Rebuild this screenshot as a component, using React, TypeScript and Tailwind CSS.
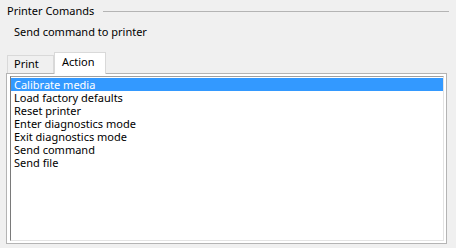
const items = [
  "Calibrate media",
  "Load factory defaults",
  "Reset printer",
  "Enter diagnostics mode",
  "Exit diagnostics mode",
  "Send command",
  "Send file",
];

export default function App() {
  return (
    <div
      className="h-[248px] w-[456px] overflow-hidden bg-[#f0f0f0] text-[11px] text-black"
      style={{ fontFamily: '"Segoe UI", "Noto Sans", sans-serif' }}
    >
      <div className="flex items-center pl-[7px] pr-[7px] pt-[3px]">
        <span className="leading-[16px]">Printer Comands</span>
        <div className="ml-[9px] h-px flex-1 bg-[#b4b4b4]" />
      </div>
      <div className="pl-[14px] pt-[5px] leading-[16px]">Send command to printer</div>

      <div className="ml-[7px] mt-[12px] flex items-end">
        <div className="h-[18px] w-[47px] border border-b-0 border-[#d9d9d9] bg-[#f0f0f0] pl-[6px] leading-[15px]">
          Print
        </div>
        <div className="relative z-10 -mb-px h-[22px] w-[52px] border border-b-0 border-[#d9d9d9] bg-white pl-[7px] leading-[17px]">
          Action
        </div>
      </div>

      <div className="ml-[6px] h-[171px] w-[441px] border border-[#b4b4b4] bg-white pb-[2px] pl-[3px] pr-[2px] pt-[2px]">
        <div className="h-full border border-b-[#e3e3e3] border-l-[#7a7a7a] border-r-[#e3e3e3] border-t-[#a0a0a0] bg-white pt-px">
          {items.map((item, i) => (
            <div
              key={item}
              className={
                i === 0
                  ? "h-[13px] bg-[#3399ff] pl-[3px] leading-[13px] text-white"
                  : "h-[13px] pl-[3px] leading-[13px]"
              }
            >
              {item}
            </div>
          ))}
        </div>
      </div>
    </div>
  );
}
